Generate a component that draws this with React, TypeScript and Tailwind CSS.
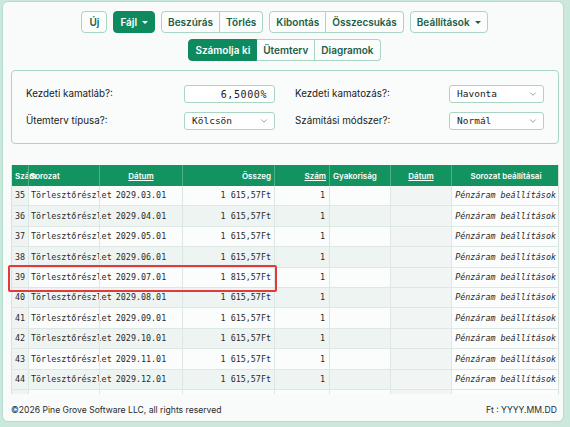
import { ChevronDown } from 'lucide-react'

const ui = "font-['Inter','Noto_Sans',sans-serif]"
const mono = "font-['DejaVu_Sans_Mono','Liberation_Mono',monospace]"

const rows = [35, 36, 37, 38, 39, 40, 41, 42, 43, 44, 45].map((n, i) => {
  const month = ((i + 2) % 12) + 1
  const year = 2029 + Math.floor((i + 2) / 12)
  return {
    n,
    date: `${year}.${String(month).padStart(2, '0')}.01`,
    amount: n === 39 ? '1 815,57Ft' : '1 615,57Ft',
  }
})

const cols = 'grid grid-cols-[16px_71px_83px_92px_55px_61px_61px_109px]'

function Btn({ label, active, caret, className = '' }: { label: string; active?: boolean; caret?: boolean; className?: string }) {
  return (
    <button
      className={`h-[22px] px-[6px] flex items-center gap-[5px] text-[10px] font-semibold border ${
        active ? 'bg-[#0f8a5f] border-[#0f8a5f] text-white' : 'bg-[#fbfdfc] border-[#a9d6c4] text-[#1d5e46]'
      } ${className}`}
    >
      {label}
      {caret && <span className="w-0 h-0 border-x-[3px] border-x-transparent border-t-[3px] border-t-current" />}
    </button>
  )
}

function Field({ value, select }: { value: string; select?: boolean }) {
  return (
    <div
      className={`h-[18px] rounded-[3px] border border-[#a9d6c4] bg-white flex items-center px-[7px] text-[#1a1a1a] ${mono} ${
        select ? 'justify-between text-[9.5px]' : 'justify-end text-[10px] tracking-[0.6px]'
      }`}
    >
      <span>{value}</span>
      {select && <ChevronDown size={10} strokeWidth={1.5} className="text-[#666] -mr-[2px]" />}
    </div>
  )
}

export default function App() {
  return (
    <div className={`w-[570px] h-[427px] bg-[#cbe8dd] pt-[1px] pl-[2px] pr-[6px] pb-[5px] ${ui}`}>
      <div className="h-full rounded-[6px] bg-[#f8fbfa] border border-[#b5dccd] flex flex-col">
        {/* toolbar */}
        <div className="pt-[9px] flex flex-col items-center gap-[6px] pl-[3px]">
          <div className="flex gap-[6px]">
            <Btn label="Új" className="rounded-[4px] px-[7px]" />
            <Btn label="Fájl" active caret className="rounded-[4px]" />
            <div className="flex">
              <Btn label="Beszúrás" className="rounded-l-[4px]" />
              <Btn label="Törlés" className="rounded-r-[4px] border-l-0" />
            </div>
            <div className="flex">
              <Btn label="Kibontás" className="rounded-l-[4px]" />
              <Btn label="Összecsukás" className="rounded-r-[4px] border-l-0" />
            </div>
            <Btn label="Beállítások" caret className="rounded-[4px]" />
          </div>
          <div className="flex">
            <Btn label="Számolja ki" active className="rounded-l-[4px]" />
            <Btn label="Ütemterv" className="border-l-0" />
            <Btn label="Diagramok" className="rounded-r-[4px] border-l-0" />
          </div>
        </div>

        {/* settings */}
        <div className="ml-[8px] mr-[4px] mt-[9px] h-[74px] rounded-[4px] border border-[#a9d6c4] bg-[#f9fcfb] px-[14px] pt-[14px] grid grid-cols-[158px_91px_20px_154px_95px] content-start gap-y-[9px] text-[9.8px] text-[#222] items-center">
          <span>Kezdeti kamatláb?:</span>
          <Field value="6,5000%" />
          <span />
          <span>Kezdeti kamatozás?:</span>
          <Field value="Havonta" select />
          <span>Ütemterv típusa?:</span>
          <Field value="Kölcsön" select />
          <span />
          <span>Számítási módszer?:</span>
          <Field value="Normál" select />
        </div>

        {/* schedule table, scrolled so the last row peeks in */}
        <div className="relative ml-[8px] mr-[4px] mt-[21px]">
          <div className="h-[229px] overflow-hidden border-x border-[#d4e3de] bg-white">
            <div className={`${cols} h-[21px] bg-[#13935f] text-white text-[8px] font-semibold items-center`}>
              <div className="px-[3px] whitespace-nowrap">Szám</div>
              <div className="px-[1px] h-full flex items-center border-l border-[#4fb088]">Sorozat</div>
              <div className="h-full flex items-center justify-center border-l border-[#4fb088]">
                <span className="underline">Dátum</span>
              </div>
              <div className="px-[3px] h-full flex items-center justify-end border-l border-[#4fb088]">Összeg</div>
              <div className="px-[3px] h-full flex items-center justify-end border-l border-[#4fb088]">
                <span className="underline">Szám</span>
              </div>
              <div className="px-[3px] h-full flex items-center border-l border-[#4fb088] whitespace-nowrap">Gyakoriság</div>
              <div className="h-full flex items-center justify-center border-l border-[#4fb088]">
                <span className="underline">Dátum</span>
              </div>
              <div className="h-full flex items-center justify-center border-l border-[#4fb088] whitespace-nowrap">Sorozat beállításai</div>
            </div>
            {rows.map((r, i) => (
              <div
                key={r.n}
                className={`${cols} h-[20.4px] border-b border-[#dde7e3] text-[8.4px] text-[#2a2a2a] ${mono} ${
                  i % 2 ? 'bg-[#eef4f1]' : 'bg-[#fbfdfc]'
                }`}
              >
                <div className="px-[3px] flex items-center bg-[#eff4f2]">{i < 10 ? r.n : ''}</div>
                <div className="px-[2px] flex items-center border-l border-[#dde7e3] whitespace-nowrap">{i < 10 ? 'Törlesztőrészlet' : ''}</div>
                <div className="flex items-center justify-center border-l border-[#dde7e3]">{i < 10 ? r.date : ''}</div>
                <div className="px-[3px] flex items-center justify-end border-l border-[#dde7e3] whitespace-nowrap">{i < 10 ? r.amount : ''}</div>
                <div className="px-[4px] flex items-center justify-end border-l border-[#dde7e3]">{i < 10 ? '1' : ''}</div>
                <div className="border-l border-[#dde7e3]" />
                <div className="border-l border-[#dde7e3] bg-[#f1f5f3]" />
                <div className="px-[4px] flex items-center justify-end border-l border-[#dde7e3] italic whitespace-nowrap bg-[#fbfdfc]">
                  {i < 10 ? 'Pénzáram beállítások' : ''}
                </div>
              </div>
            ))}
          </div>
          <div className="absolute left-[-3px] top-[100px] w-[269px] h-[27px] border-2 border-[#e03a3a] rounded-[2px]" />
        </div>

        {/* footer */}
        <div className="mt-auto mb-[4px] pl-[8px] pr-[6px] flex justify-between text-[8.6px] text-[#2b2b2b]">
          <span>©2026 Pine Grove Software LLC, all rights reserved</span>
          <span>Ft : YYYY.MM.DD</span>
        </div>
      </div>
    </div>
  )
}
